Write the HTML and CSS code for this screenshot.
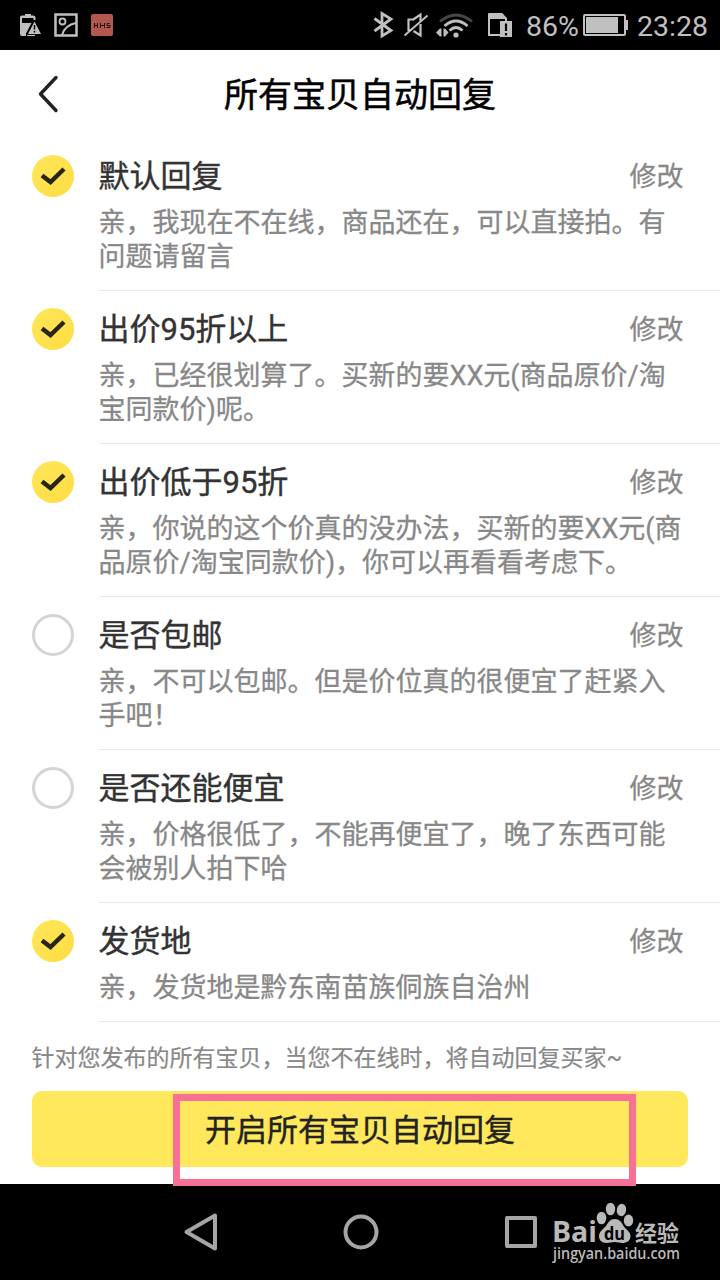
FILE: index.html
```html
<!DOCTYPE html>
<html lang="zh-CN">
<head>
<meta charset="utf-8">
<title>所有宝贝自动回复</title>
<link rel="stylesheet" href="styles.css">
</head>
<body>
<div class="screen">
  <div class="status">
    <svg class="status-left" width="120" height="50" viewBox="0 0 120 50">
      <path d="M20 17.500q0-2 2-2h3v-1.500h6v1.500h2q2.500 0 2.500 2V20h-2v-2H22v5h9.500L26 33.500v2.500h-4q-2 0-2-2z" fill="#c0c0c0"/>
      <path d="M34.500 21.500 41 34H28z" fill="#c0c0c0"/>
      <path d="M34.500 25v4.500M34.500 30.800v1.800" stroke="#000" stroke-width="1.500"/>
      <path d="M27 35.500h8" stroke="#c0c0c0" stroke-width="1.200"/>
      <rect x="55.500" y="14.500" width="21" height="21" fill="none" stroke="#c0c0c0" stroke-width="2.500"/>
      <circle cx="62.500" cy="21.500" r="3" fill="none" stroke="#c0c0c0" stroke-width="1.800"/>
      <path d="M62 35q3-10 14-12" fill="none" stroke="#c0c0c0" stroke-width="2"/>
      <rect x="91" y="14" width="22" height="22" rx="2" fill="#b25850"/>
      <path d="M94.500 23v5m3-5v5m-3-2.500h3M100.500 28v-5m4 5v-5m-4 2.500h4M110 23.500h-3v2h3v2h-3.500" fill="none" stroke="#1e1010"/>
    </svg>
    <svg class="status-right" width="160" height="50" viewBox="360 0 160 50">
      <path d="M374.500 18.500 391 30.500l-9 5.500V13.500l9 5.500-16.500 12" fill="none" stroke="#c0c0c0" stroke-width="2.800"/>
      <path d="M413 19.500h-4.500v10.500h3M412.500 20l8-5.500V21M413.500 31l7 4.500V24" fill="none" stroke="#c0c0c0" stroke-width="2.200"/>
      <path d="M404.500 35.500l23-20" fill="none" stroke="#c0c0c0" stroke-width="2"/>
      <path d="M440 21.500q16-13 32 0" fill="none" stroke="#484848" stroke-width="2.800"/>
      <path d="M444.500 26q11.500-10 23 0M449.500 30.500q6.500-6 13 0" fill="none" stroke="#c0c0c0" stroke-width="2.800"/>
      <circle cx="456" cy="35" r="2.600" fill="#c0c0c0"/>
      <path d="M441.500 28.500v8h-1.500l-4-4 4-4zM443.500 28.500v8h1.500l3.500-4-3.500-4z" fill="#c0c0c0"/>
      <path d="M489 14h12.500l4.500 4.500V22M489 14v21h11" fill="none" stroke="#c0c0c0" stroke-width="2"/>
      <path d="M488 14q0-1 1-1h13l5 6H488z" fill="#c0c0c0"/>
      <path d="M500 21h12v16h-12z" fill="#c0c0c0"/>
      <path d="M506 23.500v7.500M506 33v2.500" stroke="#000" stroke-width="2.200"/>
    </svg>
    <span class="percent">86%</span>
    <svg class="battery" width="46" height="50" viewBox="583 0 46 50">
      <rect x="584" y="15" width="41" height="20" rx="1" fill="none" stroke="#c0c0c0" stroke-width="2"/>
      <path d="M586 17h32v16h-32zM626 20h2v10h-2z" fill="#c0c0c0"/>
    </svg>
    <span class="clock">23:28</span>
  </div>

  <div class="header">
    <svg class="back" width="24" height="42" viewBox="36 73 24 42"><path d="M56 77.500 40.500 94 56 110.500" fill="none" stroke="#222" stroke-width="3.400" stroke-linecap="round" stroke-linejoin="round"/></svg>
    <h1 class="title">所有宝贝自动回复</h1>
  </div>

  <div class="list">
    <div class="item">
      <div class="check on"><svg width="42" height="42"><path d="M10 20.500 18.500 27 32 14" fill="none" stroke="#292418" stroke-width="4.500"/></svg></div>
      <div class="body"><div class="row"><span class="name">默认回复</span><span class="edit">修改</span></div>
      <p class="desc">亲，我现在不在线，商品还在，可以直接拍。有<br>问题请留言</p></div>
    </div>
    <div class="item">
      <div class="check on"><svg width="42" height="42"><path d="M10 20.500 18.500 27 32 14" fill="none" stroke="#292418" stroke-width="4.500"/></svg></div>
      <div class="body"><div class="row"><span class="name">出价95折以上</span><span class="edit">修改</span></div>
      <p class="desc">亲，已经很划算了。买新的要XX元(商品原价/淘<br>宝同款价)呢。</p></div>
    </div>
    <div class="item">
      <div class="check on"><svg width="42" height="42"><path d="M10 20.500 18.500 27 32 14" fill="none" stroke="#292418" stroke-width="4.500"/></svg></div>
      <div class="body"><div class="row"><span class="name">出价低于95折</span><span class="edit">修改</span></div>
      <p class="desc">亲，你说的这个价真的没办法，买新的要XX元(商<br>品原价/淘宝同款价)，你可以再看看考虑下。</p></div>
    </div>
    <div class="item">
      <div class="check"></div>
      <div class="body"><div class="row"><span class="name">是否包邮</span><span class="edit">修改</span></div>
      <p class="desc">亲，不可以包邮。但是价位真的很便宜了赶紧入<br>手吧！</p></div>
    </div>
    <div class="item">
      <div class="check"></div>
      <div class="body"><div class="row"><span class="name">是否还能便宜</span><span class="edit">修改</span></div>
      <p class="desc">亲，价格很低了，不能再便宜了，晚了东西可能<br>会被别人拍下哈</p></div>
    </div>
    <div class="item">
      <div class="check on"><svg width="42" height="42"><path d="M10 20.500 18.500 27 32 14" fill="none" stroke="#292418" stroke-width="4.500"/></svg></div>
      <div class="body"><div class="row"><span class="name">发货地</span><span class="edit">修改</span></div>
      <p class="desc">亲，发货地是黔东南苗族侗族自治州</p></div>
    </div>
  </div>

  <div class="footer">
    <p class="hint">针对您发布的所有宝贝，当您不在线时，将自动回复买家~</p>
    <div class="button">开启所有宝贝自动回复</div>
  </div>

  <div class="nav">
    <svg width="720" height="96" viewBox="0 1184 720 96">
      <path d="M215 1215.500v33L186.500 1232z" fill="none" stroke="#a5a5a5" stroke-width="4" stroke-linejoin="round"/>
      <circle cx="361" cy="1232" r="15.500" fill="none" stroke="#a5a5a5" stroke-width="4"/>
      <rect x="507" y="1218" width="28" height="28" fill="none" stroke="#a5a5a5" stroke-width="4" stroke-linejoin="round"/>
      <g fill="#b9b9b9">
        <ellipse cx="601.500" cy="1218" rx="4.800" ry="6.300"/>
        <ellipse cx="610.500" cy="1209" rx="4.700" ry="6.300"/>
        <ellipse cx="621.500" cy="1210" rx="4.700" ry="6.200" transform="rotate(10 621.500 1210)"/>
        <ellipse cx="628.500" cy="1220.500" rx="4.700" ry="6"/>
        <path d="M614.500 1219c5 0 7 3 9 7 3 4 7 6 7 10 0 5-4 7-8 7-3 0-5-1-8-1s-5 1-8 1c-5 0-7.500-3-7.500-7s4-7 7-10c2-3 3.500-7 8.500-7z"/>
        <text class="logo" x="552" y="1242" textLength="45" lengthAdjust="spacingAndGlyphs">Bai</text>
        <text class="logo-cn" x="635" y="1240.500" textLength="44" lengthAdjust="spacingAndGlyphs">经验</text>
        <text class="domain" x="553" y="1259" textLength="127" lengthAdjust="spacingAndGlyphs">jingyan.baidu.com</text>
      </g>
      <text class="logo-du" x="604" y="1239.500" textLength="21" lengthAdjust="spacingAndGlyphs">du</text>
    </svg>
  </div>
  <div class="highlight"></div>
</div>
</body>
</html>
```
FILE: styles.css
```css
body { margin: 0; background: #fff; font-family: Roboto, "Noto Sans CJK SC", sans-serif; }
h1, p { margin: 0; font-weight: 400; }
svg { display: block; }
.screen { position: relative; width: 720px; height: 1280px; overflow: hidden; display: flex; flex-direction: column; }
.status { height: 50px; background: #000; color: #c0c0c0; display: flex; align-items: center; flex: none; white-space: nowrap; }
.status-right { margin-left: auto; }
.percent { font-size: 28.5px; line-height: 50px; width: 57px; margin-left: 6px; padding-top: 3px; }
.clock { font-size: 28.5px; line-height: 50px; width: 83px; padding-left: 8px; padding-top: 3px; }
.header { height: 88px; flex: none; display: grid; grid-template-columns: 60px 1fr 60px; align-items: center; }
.back { margin-left: 36px; }
.title { text-align: center; font-size: 34px; line-height: 50px; color: #000; padding-top: 2px; -webkit-text-stroke: 0.5px; }
.list { flex: none; }
.item { display: flex; padding-left: 32px; }
.check { width: 42px; height: 42px; margin: 17px 25px 0 0; box-sizing: border-box; border: 3px solid #d4d4d4; border-radius: 50%; flex: none; }
.check.on { border: 0; background: linear-gradient(135deg, #ffe65a, #fedd42); }
.body { flex: 1; padding-bottom: 16px; border-bottom: 1px solid #e8e8e8; }
.row { height: 68px; padding: 0 36px 0 0; display: flex; justify-content: space-between; }
.name { font-size: 31px; line-height: 77px; color: #333; margin-left: -0.5px; -webkit-text-stroke: 0.4px; }
.edit { font-size: 27px; line-height: 79px; color: #888; margin-right: 0.5px; -webkit-text-stroke: 0.3px; }
.desc { font-size: 27px; line-height: 34px; color: #888; white-space: nowrap; margin-left: -0.5px; -webkit-text-stroke: 0.3px; }
.footer { flex: 1; padding: 19px 32px 0; }
.hint { font-size: 23px; line-height: 36px; height: 50px; color: #888; white-space: nowrap; margin-left: -0.5px; -webkit-text-stroke: 0.2px; }
.button { height: 76px; border-radius: 10px; background: #ffe85b; color: #222; text-align: center; font-size: 31px; line-height: 79px; -webkit-text-stroke: 0.4px; }
.nav { height: 96px; background: #000; flex: none; }
.highlight { position: absolute; left: 173px; top: 1094px; width: 449px; height: 78px; border: 7px solid #f87095; }
.logo { font: 700 28px "Open Sans", sans-serif; }
.logo-du { font: 700 18px "Open Sans", sans-serif; fill: #000; }
.logo-cn { font: 700 22px "Noto Sans CJK SC", sans-serif; }
.domain { font: 600 15.5px "Open Sans", sans-serif; }
```
